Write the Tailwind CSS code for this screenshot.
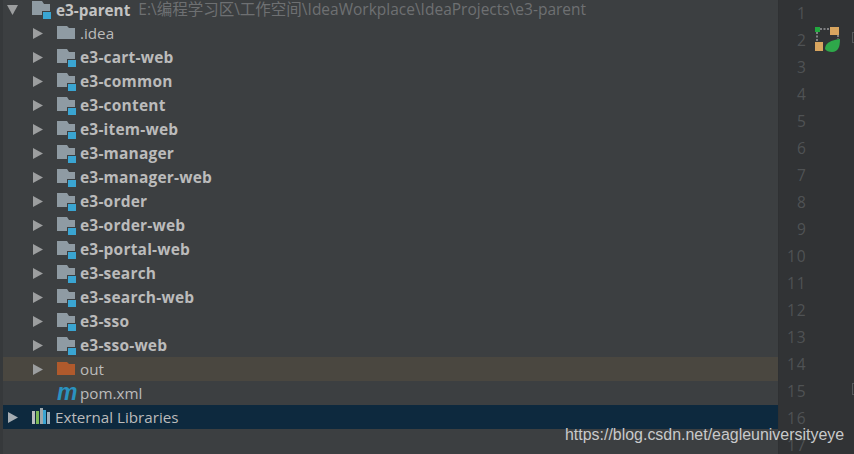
<!DOCTYPE html>
<html lang="en">
<head>
    <meta charset="UTF-8">
    <title>e3-parent</title>
    <script src="https://cdn.jsdelivr.net/npm/@tailwindcss/browser@4"></script>
</head>
<body class="bg-[#3c3f41] overflow-hidden">
    <div class="relative flex w-[854px] h-[454px] overflow-hidden font-['Open_Sans','Noto_Sans_CJK_SC',sans-serif] text-[15.2px] text-[#bbbbbb]">
        <!-- project tree -->
        <div class="w-[779px] shrink-0 border-r border-[#2f3133] border-l-[3px] border-l-[#36393b]">
            <div class="-mt-[3px]">
                <div class="h-6 flex items-center pl-[4px]">
                    <svg class="w-[11px] h-[10px] mt-[1px]" viewBox="0 0 11 10"><path d="M0 0h11L5.500 10z" fill="#9c9e9f"/></svg>
                    <svg class="ml-[14px] w-[20px] h-[20px]" viewBox="0 0 20 20"><path d="M0 2h10l2 3h6v11H0z" fill="#8f9ba3"/><rect x="10" y="12" width="10" height="8" fill="#3c3f41"/><rect x="11" y="13" width="8" height="7" fill="#3aa5d2"/></svg>
                    <span class="ml-[4px] mt-[2px] font-bold text-[15.3px] text-[#c3c3c3]">e3-parent</span>
                    <span class="ml-[8px] mt-[2px] text-[15.5px] text-[#6e7072] whitespace-nowrap">E:\编程学习区\工作空间\IdeaWorkplace\IdeaProjects\e3-parent</span>
                </div>
                <div class="h-6 flex items-center pl-[30px]">
                    <svg class="w-[10px] h-[11px]" viewBox="0 0 10 11"><path d="M0 0l10 5.500L0 11z" fill="#9c9e9f"/></svg>
                    <svg class="ml-[14px] w-[20px] h-[20px]" viewBox="0 0 20 20"><path d="M0 3h10l2 2h6v11H0z" fill="#8f9ba3"/></svg>
                    <span class="ml-[3px]">.idea</span>
                </div>
                <div id="modules"></div>
                <div class="h-6 flex items-center pl-[30px] bg-[#4a4740]">
                    <svg class="w-[10px] h-[11px]" viewBox="0 0 10 11"><path d="M0 0l10 5.500L0 11z" fill="#9c9e9f"/></svg>
                    <svg class="ml-[14px] w-[20px] h-[20px]" viewBox="0 0 20 20"><path d="M0 3h10l2 2h6v11H0z" fill="#b05a2c"/></svg>
                    <span class="ml-[3px]">out</span>
                </div>
                <div class="h-6 flex items-center pl-[54px]">
                    <span class="w-[23px] font-['Liberation_Sans',sans-serif] italic font-bold text-[23px] leading-none text-[#2a93c0] -mt-[2px]">m</span>
                    <span>pom.xml</span>
                </div>
                <div class="h-6 flex items-center pl-[5px] bg-[#0d293e]">
                    <svg class="w-[10px] h-[11px]" viewBox="0 0 10 11"><path d="M0 0l10 5.500L0 11z" fill="#a5adb3"/></svg>
                    <svg class="ml-[14px] w-[18px] h-[16px] -mt-[2px]" viewBox="0 0 18 16"><rect x="0" y="3" width="3" height="13" fill="#b8bcbe"/><rect x="4" y="3" width="3" height="13" fill="#7cb95a"/><rect x="8" y="0" width="3" height="16" fill="#9fa7ab"/><rect x="11" y="2" width="3" height="14" fill="#3aa5d2"/><rect x="15" y="4" width="3" height="12" fill="#9fb0bc"/></svg>
                    <span class="ml-[5px]">External Libraries</span>
                </div>
            </div>
        </div>
        <!-- gutter with line numbers -->
        <div class="relative flex-1 bg-[#313335] pl-[18px] text-[15.5px] tracking-[1px] text-[#4f5254]">
            <div id="lines"></div>
            <svg class="absolute left-[34px] top-[25px] w-[28px] h-[28px]" viewBox="0 0 28 28">
                <path d="M7 4h10M4 7v10M25 10v4" stroke="#9a9c9e" stroke-width="1.500" stroke-dasharray="2 1.500" fill="none"/>
                <rect x="2" y="2" width="5" height="5" fill="#22a83f"/>
                <rect x="17" y="2" width="9" height="8" fill="#d8a55f"/>
                <rect x="2" y="17" width="8" height="9" fill="#d8a55f"/>
                <path d="M12 24C12 18 18 15 27 14 27 22 25 27 19 27 16 27 13 26 12 24z" fill="#2ea84a"/>
            </svg>
            <div class="absolute right-0 top-[32px] w-[2px] h-[11px] border border-r-0 border-[#55585a]"></div>
            <div class="absolute right-0 top-[383px] w-[2px] h-[12px] border border-r-0 border-[#55585a]"></div>
        </div>
        <!-- watermark -->
        <span class="absolute left-[565px] top-[425px] font-['Liberation_Sans',sans-serif] text-[15.95px] leading-5 text-[#c8cacb]">https://blog.csdn.net/eagleuniversityeye</span>
    </div>

    <script>
const moduleNames = ['e3-cart-web', 'e3-common', 'e3-content', 'e3-item-web', 'e3-manager', 'e3-manager-web', 'e3-order', 'e3-order-web', 'e3-portal-web', 'e3-search', 'e3-search-web', 'e3-sso', 'e3-sso-web'];
const modules = document.getElementById('modules');
for (const name of moduleNames) {
    const row = document.createElement('div');
    row.className = 'h-6 flex items-center pl-[30px]';
    row.innerHTML = '<svg class="w-[10px] h-[11px]" viewBox="0 0 10 11"><path d="M0 0l10 5.500L0 11z" fill="#9c9e9f"/></svg>'
        + '<svg class="ml-[14px] w-[20px] h-[20px]" viewBox="0 0 20 20"><path d="M0 2h10l2 3h6v11H0z" fill="#8f9ba3"/><rect x="10" y="12" width="10" height="8" fill="#3c3f41"/><rect x="11" y="13" width="8" height="7" fill="#3aa5d2"/></svg>'
        + '<span class="ml-[3px] mt-[2px] font-bold text-[15.5px] tracking-[0.2px]">' + name + '</span>';
    modules.appendChild(row);
}

const lines = document.getElementById('lines');
for (let i = 1; i <= 17; i++) {
    const line = document.createElement('div');
    line.className = i < 10 ? 'leading-[27px]' : 'leading-[27px] -ml-[10px]';
    line.textContent = i;
    lines.appendChild(line);
}
    </script>
</body>
</html>
